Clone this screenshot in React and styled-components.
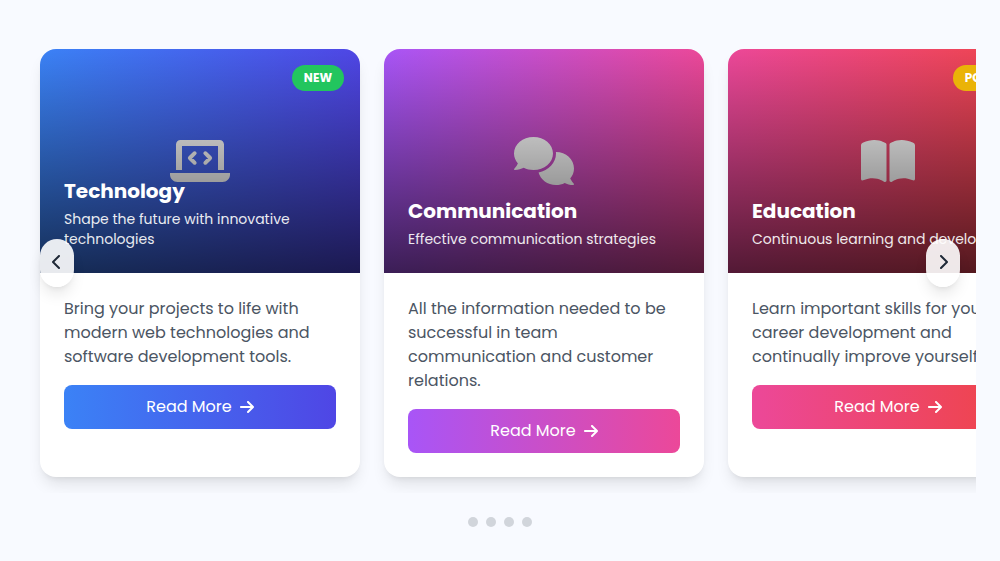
import React, { useRef } from "react";
import styled, { createGlobalStyle } from "styled-components";
import { FaArrowRight, FaChevronLeft, FaChevronRight } from "react-icons/fa6";

const GlobalStyle = createGlobalStyle`
  *, *::before, *::after { box-sizing: border-box; }
  body {
    margin: 0;
    background: #f8faff;
    font-family: Poppins, Inter, "Open Sans", sans-serif;
    font-size: 16px;
    line-height: 24px;
  }
  h2, p { margin: 0; }
  button { font: inherit; border: 0; cursor: pointer; }
`;

const Page = styled.main`
  padding: 33px 24px 32px;
`;

const Carousel = styled.section`
  position: relative;
`;

const Track = styled.div`
  display: flex;
  gap: 24px;
  padding: 16px;
  overflow-x: auto;
  scrollbar-width: none;
`;

const Card = styled.article`
  flex: 0 0 320px;
  background: #fff;
  border-radius: 16px;
  overflow: hidden;
  box-shadow: 0 10px 15px -3px rgba(0, 0, 0, 0.1), 0 4px 6px -4px rgba(0, 0, 0, 0.1);
`;

const CardHeader = styled.header`
  position: relative;
  display: grid;
  height: 224px;
  color: #fff;
  background: linear-gradient(to right, ${(p) => p.$from}, ${(p) => p.$to});
`;

const Artwork = styled.div`
  grid-area: 1 / 1;
  display: flex;
  align-items: center;
  justify-content: center;

  svg {
    height: 48px;
    fill: currentColor;
  }
`;

const Caption = styled.div`
  grid-area: 1 / 1;
  z-index: 1;
  display: flex;
  flex-direction: column;
  justify-content: flex-end;
  gap: 4px;
  padding: 24px;
  background: linear-gradient(to top, rgba(0, 0, 0, 0.65), transparent);
`;

const Title = styled.h2`
  font-size: 20px;
  line-height: 28px;
  font-weight: 700;
`;

const Subtitle = styled.p`
  font-size: 14px;
  line-height: 20px;
  opacity: 0.9;
`;

const Badge = styled.span`
  position: absolute;
  z-index: 2;
  top: 16px;
  right: 16px;
  padding: 4px 12px;
  border-radius: 999px;
  background: ${(p) => p.$color};
  font-size: 12px;
  line-height: 18px;
  font-weight: 700;
`;

const CardBody = styled.div`
  display: flex;
  flex-direction: column;
  gap: 16px;
  padding: 24px;
  color: #4b5563;
`;

const ReadMore = styled.button`
  display: flex;
  align-items: center;
  justify-content: center;
  gap: 8px;
  padding: 10px 16px;
  border-radius: 8px;
  color: #fff;
  background: linear-gradient(to right, ${(p) => p.$from}, ${(p) => p.$to});

  svg {
    width: 14px;
    height: 16px;
  }
`;

const ArrowButton = styled.button`
  position: absolute;
  z-index: 3;
  top: 50%;
  ${(p) => p.$side}: 16px;
  transform: translateY(-50%);
  padding: 12px;
  border-radius: 999px;
  color: #1f2937;
  background: rgba(255, 255, 255, 0.9);
  box-shadow: 0 10px 15px -3px rgba(0, 0, 0, 0.1), 0 4px 6px -4px rgba(0, 0, 0, 0.1);

  svg {
    width: 10px;
    height: 16px;
    vertical-align: -2px;
  }
`;

const Dots = styled.nav`
  display: flex;
  justify-content: center;
  gap: 8px;
  margin-top: 24px;
`;

const Dot = styled.button`
  width: 10px;
  height: 10px;
  padding: 0;
  border-radius: 50%;
  background: #d1d5db;
`;

function LaptopCode() {
  return (
    <svg viewBox="0 0 640 512" aria-hidden="true">
      <path d="M64 80c0-26.500 21.500-48 48-48h416c26.500 0 48 21.500 48 48v272h-64V96H128v256H64z" />
      <path d="M0 384h640v16c0 44.200-35.800 80-80 80H80c-44.200 0-80-35.800-80-80z" />
      <path
        d="M263 173l-51 51 51 51M377 173l51 51-51 51"
        fill="none"
        stroke="currentColor"
        strokeWidth="42"
        strokeLinecap="round"
        strokeLinejoin="round"
      />
    </svg>
  );
}

function Comments() {
  return (
    <svg viewBox="0 0 640 512" aria-hidden="true">
      <path d="M416 176C416 78.800 322.900 0 208 0S0 78.800 0 176c0 39.600 15.600 76 41.700 105.400c-16.400 32.800-39.200 57.300-39.600 57.700c-2.100 2.200-2.700 5.500-1.400 8.300C1.900 350.300 4.600 352 7.700 352c38.300 0 70.700-11.100 95.700-24C134.200 343.100 169.800 352 208 352C322.900 352 416 273.200 416 176z" />
      <path d="M599.600 443.700C624.800 413.900 640 376.600 640 336C640 238.800 554 160 448 160l-1 0C447.500 165.300 448 170.600 448 176c0 98.600-79.700 181.200-186.100 202.500C282.700 455.100 357.100 512 448 512c33.700 0 65.300-8 92.900-22C565.200 502 596.100 512 632.300 512c3.100 0 5.800-1.700 7-4.600c1.200-2.900 .7-6.100-1.400-8.400C637.600 498.700 615.900 475.300 599.600 443.700z" />
    </svg>
  );
}

function BookOpen() {
  return (
    <svg viewBox="0 0 576 512" aria-hidden="true">
      <path d="M144 32C107 31 64 41 19 61C7 66 0 78 0 90V448c0 11.500 12 19.500 22.500 14.600C149 404 242 474 246 477C249 479 252 480 256 480c12 0 16-11 16-16V80c0-5-2.500-10-7-13C263 66 217 33 144 32z" />
      <path d="M432 32C469 31 512 41 557 61C569 66 576 78 576 90V448c0 11.500-12 19.500-22.500 14.600C427 404 334 474 330 477C327 479 324 480 320 480c-12 0-16-11-16-16V80c0-5 2.500-10 7-13C313 66 359 33 432 32z" />
    </svg>
  );
}

const cards = [
  {
    title: "Technology",
    subtitle: "Shape the future with innovative technologies",
    text: "Bring your projects to life with modern web technologies and software development tools.",
    from: "#3b82f6",
    to: "#4f46e5",
    Icon: LaptopCode,
    badge: { label: "NEW", color: "#22c55e" },
  },
  {
    title: "Communication",
    subtitle: "Effective communication strategies",
    text: "All the information needed to be successful in team communication and customer relations.",
    from: "#a855f7",
    to: "#ec4899",
    Icon: Comments,
  },
  {
    title: "Education",
    subtitle: "Continuous learning and development",
    text: "Learn important skills for your career development and continually improve yourself.",
    from: "#ec4899",
    to: "#ef4444",
    Icon: BookOpen,
    badge: { label: "POPULAR", color: "#eab308" },
  },
];

function TopicCard({ title, subtitle, text, from, to, Icon, badge }) {
  return (
    <Card>
      <CardHeader $from={from} $to={to}>
        <Artwork><Icon /></Artwork>
        <Caption>
          <Title>{title}</Title>
          <Subtitle>{subtitle}</Subtitle>
        </Caption>
        {badge && <Badge $color={badge.color}>{badge.label}</Badge>}
      </CardHeader>
      <CardBody>
        <p>{text}</p>
        <ReadMore type="button" $from={from} $to={to}>
          Read More <FaArrowRight aria-hidden="true" />
        </ReadMore>
      </CardBody>
    </Card>
  );
}

export default function App() {
  const track = useRef(null);
  const scrollBy = (left) => track.current.scrollBy({ left, behavior: "smooth" });
  const goTo = (index) => track.current.scrollTo({ left: index * 344, behavior: "smooth" });

  return (
    <Page>
      <GlobalStyle />
      <Carousel>
        <Track ref={track}>
          {cards.map((card) => <TopicCard key={card.title} {...card} />)}
        </Track>
        <ArrowButton type="button" $side="left" aria-label="Previous" onClick={() => scrollBy(-344)}>
          <FaChevronLeft />
        </ArrowButton>
        <ArrowButton type="button" $side="right" aria-label="Next" onClick={() => scrollBy(344)}>
          <FaChevronRight />
        </ArrowButton>
      </Carousel>
      <Dots>
        {[0, 1, 2, 3].map((i) => (
          <Dot key={i} type="button" aria-label={`Slide ${i + 1}`} onClick={() => goTo(i)} />
        ))}
      </Dots>
    </Page>
  );
}
